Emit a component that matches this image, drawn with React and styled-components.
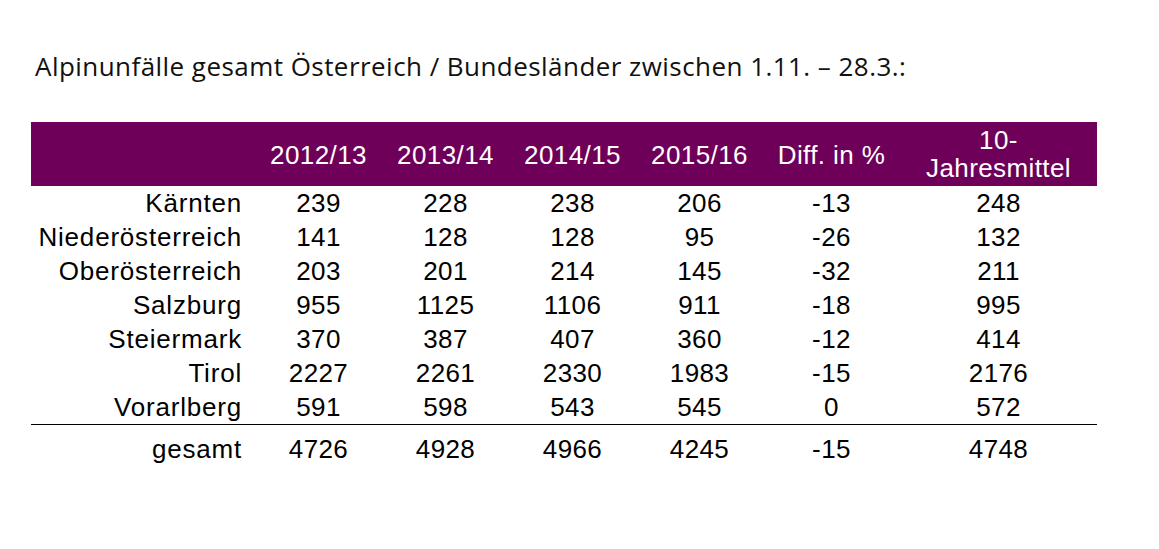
import React from "react";
import styled, { createGlobalStyle } from "styled-components";

const GlobalStyle = createGlobalStyle`
  html, body {
    margin: 0;
    padding: 0;
    background: #ffffff;
  }
`;

const Page = styled.div`
  width: 1159px;
  height: 549px;
  background: #fff;
  padding: 47px 0 0 31px;
  box-sizing: border-box;
`;

const Title = styled.h1`
  margin: 0 0 0 4px;
  font-family: "Open Sans", "DejaVu Sans", sans-serif;
  font-weight: 400;
  font-size: 26px;
  letter-spacing: 0.45px;
  line-height: 38px;
  color: #111;
`;

const Table = styled.div`
  margin-top: 37px;
  width: 1066px;
  display: grid;
  grid-template-columns: 224px 127px 127px 127px 127px 137px 197px;
  font-family: "Liberation Sans", Arial, sans-serif;
  font-size: 26px;
  letter-spacing: 0.4px;
  color: #000;
`;

const HeadRow = styled.div`
  display: contents;
`;

const HeadCell = styled.div`
  background: #6f0059;
  color: #fff;
  height: 64px;
  display: flex;
  align-items: center;
  justify-content: center;
  text-align: center;
  line-height: 28px;
  padding-top: ${(p) => (p.$two ? "0" : "2px")};
  box-sizing: border-box;
`;

const Row = styled.div`
  display: contents;
`;

const Label = styled.div`
  text-align: right;
  padding-right: 13px;
  letter-spacing: 0.8px;
  height: ${(p) => (p.$total ? "44px" : "34px")};
  line-height: 34px;
  padding-top: ${(p) => (p.$total ? "7px" : "0")};
  box-sizing: border-box;
  border-top: ${(p) => (p.$total ? "1.5px solid #000" : "none")};
`;

const Cell = styled.div`
  text-align: center;
  height: ${(p) => (p.$total ? "44px" : "34px")};
  line-height: 34px;
  padding-top: ${(p) => (p.$total ? "7px" : "0")};
  box-sizing: border-box;
  border-top: ${(p) => (p.$total ? "1.5px solid #000" : "none")};
`;

const headers = ["2012/13", "2013/14", "2014/15", "2015/16", "Diff. in %"];

const rows = [
  ["Kärnten", "239", "228", "238", "206", "-13", "248"],
  ["Niederösterreich", "141", "128", "128", "95", "-26", "132"],
  ["Oberösterreich", "203", "201", "214", "145", "-32", "211"],
  ["Salzburg", "955", "1125", "1106", "911", "-18", "995"],
  ["Steiermark", "370", "387", "407", "360", "-12", "414"],
  ["Tirol", "2227", "2261", "2330", "1983", "-15", "2176"],
  ["Vorarlberg", "591", "598", "543", "545", "0", "572"],
];

const total = ["gesamt", "4726", "4928", "4966", "4245", "-15", "4748"];

const App = () => {
  return (
    <Page>
      <GlobalStyle />
      <Title>Alpinunfälle gesamt Österreich / Bundesländer zwischen 1.11. – 28.3.:</Title>
      <Table>
        <HeadRow>
          <HeadCell />
          {headers.map((h) => (
            <HeadCell key={h}>{h}</HeadCell>
          ))}
          <HeadCell $two>
            10-
            <br />
            Jahresmittel
          </HeadCell>
        </HeadRow>
        {rows.map((r) => (
          <Row key={r[0]}>
            <Label>{r[0]}</Label>
            {r.slice(1).map((v, i) => (
              <Cell key={i}>{v}</Cell>
            ))}
          </Row>
        ))}
        <Row>
          <Label $total>{total[0]}</Label>
          {total.slice(1).map((v, i) => (
            <Cell key={i} $total>
              {v}
            </Cell>
          ))}
        </Row>
      </Table>
    </Page>
  );
};

export default App;
